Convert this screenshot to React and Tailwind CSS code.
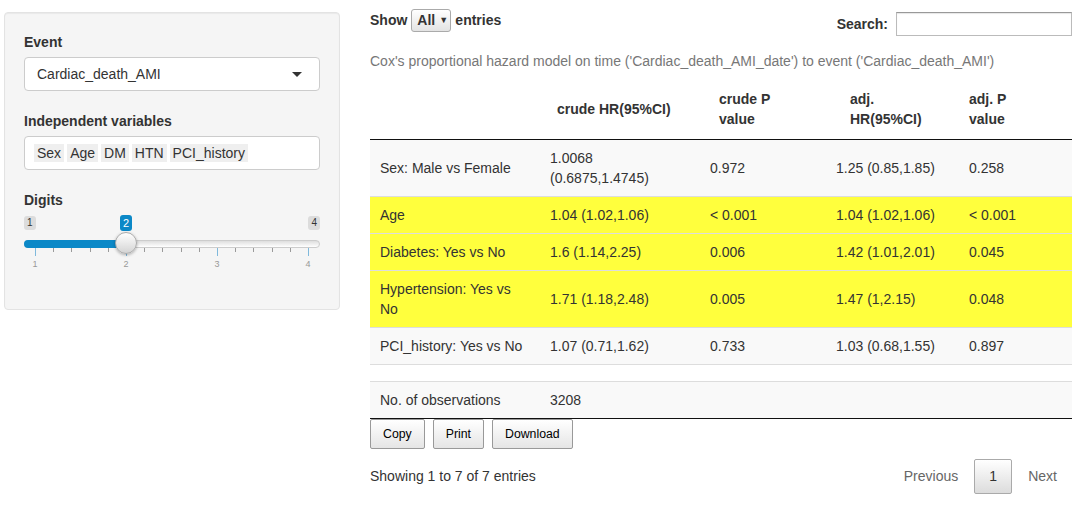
const rows = [
  { v: "Sex: Male vs Female", c: "1.0068\n(0.6875,1.4745)", p: "0.972", a: "1.25 (0.85,1.85)", ap: "0.258", bg: "bg-[#f9f9f9]" },
  { v: "Age", c: "1.04 (1.02,1.06)", p: "< 0.001", a: "1.04 (1.02,1.06)", ap: "< 0.001", bg: "bg-[#ffff3d]" },
  { v: "Diabetes: Yes vs No", c: "1.6 (1.14,2.25)", p: "0.006", a: "1.42 (1.01,2.01)", ap: "0.045", bg: "bg-[#ffff3d]" },
  { v: "Hypertension: Yes vs\nNo", c: "1.71 (1.18,2.48)", p: "0.005", a: "1.47 (1,2.15)", ap: "0.048", bg: "bg-[#ffff3d]" },
  { v: "PCI_history: Yes vs No", c: "1.07 (0.71,1.62)", p: "0.733", a: "1.03 (0.68,1.55)", ap: "0.897", bg: "bg-[#f9f9f9]" },
  { v: "", c: "", p: "", a: "", ap: "", bg: "bg-white" },
  { v: "No. of observations", c: "3208", p: "", a: "", ap: "", bg: "bg-[#f9f9f9]" },
];

const tags = ["Sex", "Age", "DM", "HTN", "PCI_history"];

// major ticks at 11, 102, 193, 284 (relative to slider box)
const majors = [11, 102, 193, 284];
const minors = [];
for (let i = 0; i < 3; i++) {
  for (let j = 1; j < 5; j++) minors.push(11 + i * 91 + j * 18.2);
}

const Slider = () => (
  <div className="relative h-[60px] mt-[5px]">
    <span className="absolute left-0 top-[1px] px-[3px] rounded-[3px] bg-[#dcdcdc] text-[10px] leading-[14px] text-[#333]">1</span>
    <span className="absolute right-0 top-[1px] px-[3px] rounded-[3px] bg-[#dcdcdc] text-[10px] leading-[14px] text-[#333]">4</span>
    <span className="absolute left-[96px] top-0 px-[3px] rounded-[3px] bg-[#0b88c7] text-[11px] leading-[16px] text-white">2</span>
    <div className="absolute left-0 right-0 top-[25px] h-[8px] rounded-full border border-[#cccccc] bg-gradient-to-b from-[#dedede] to-white" />
    <div className="absolute left-0 w-[102px] top-[25px] h-[8px] rounded-l-full bg-[#0b88c7]" />
    {majors.map((x, i) => (
      <div key={"M" + i}>
        <div className="absolute top-[33px] h-[8px] w-px bg-[#7fb9dc]" style={{ left: x }} />
        <span className="absolute top-[44px] w-[20px] -ml-[10px] text-center text-[9px] leading-[11px] text-[#999]" style={{ left: x }}>
          {i + 1}
        </span>
      </div>
    ))}
    {minors.map((x, i) => (
      <div key={"m" + i} className="absolute top-[33px] h-[4px] w-px bg-[#9a9a9a]" style={{ left: x }} />
    ))}
    <div className="absolute left-[91px] top-[17px] w-[22px] h-[22px] rounded-full border border-[#aaaaaa] bg-gradient-to-b from-white to-[#d4d4d4] shadow-[0_1px_3px_rgba(0,0,0,0.3)]" />
  </div>
);

const Sidebar = () => (
  <div className="w-[340px] pl-[4px] pt-[12px] shrink-0">
    <div className="w-[336px] h-[298px] bg-[#f5f5f5] border border-[#e3e3e3] rounded-[4px] shadow-[inset_0_1px_1px_rgba(0,0,0,0.05)] px-[19px] pt-[19px]">
      <div className="font-bold leading-[20px] mb-[5px]">Event</div>
      <div className="h-[34px] bg-white border border-[#cccccc] rounded-[4px] flex items-center justify-between pl-[12px] pr-[17px]">
        <span>Cardiac_death_AMI</span>
        <svg width="10" height="5" viewBox="0 0 10 5">
          <polygon points="0,0 10,0 5,5" fill="#333" />
        </svg>
      </div>

      <div className="font-bold leading-[20px] mt-[20px] mb-[5px]">Independent variables</div>
      <div className="h-[34px] bg-white border border-[#cccccc] rounded-[4px] flex items-center gap-[3px] pl-[9px]">
        {tags.map((t) => (
          <span key={t} className="bg-[#efefef] px-[3px] leading-[18px]">
            {t}
          </span>
        ))}
      </div>

      <div className="font-bold leading-[20px] mt-[20px]">Digits</div>
      <Slider />
    </div>
  </div>
);

const Btn = ({ children }) => (
  <div className="h-[30px] px-[12px] flex items-center border border-[#999] rounded-[2px] bg-gradient-to-b from-white to-[#e5e5e5] text-[12.3px] text-black">
    {children}
  </div>
);

const App = () => {
  return (
    <div className="flex w-[1080px] h-[521px] bg-white text-[14px] text-[#333] font-['Liberation_Sans',Arial,sans-serif] overflow-hidden">
      <Sidebar />

      <div className="ml-[30px] w-[702px]">
        <div className="h-[43px] flex justify-between items-start">
          <div className="mt-[9px] h-[23px] flex items-center font-bold">
            <span>Show</span>
            <div className="mx-[4px] w-[40px] h-[23px] border border-[#aaa] rounded-[3px] bg-gradient-to-b from-white to-[#e3e3e3] flex items-center pl-[5px] gap-[4px]">
              <span>All</span>
              <span className="text-[9px]">▼</span>
            </div>
            <span>entries</span>
          </div>
          <div className="mt-[12px] h-[24px] flex items-center font-bold">
            <span className="mr-[8px]">Search:</span>
            <div className="w-[176px] h-[24px] bg-white border border-[#bbb] border-t-[#999] shadow-[inset_0_1px_1px_rgba(0,0,0,0.1)]" />
          </div>
        </div>

        <div className="py-[8px] leading-[20px] text-[#777]">
          Cox's proportional hazard model on time ('Cardiac_death_AMI_date') to event ('Cardiac_death_AMI')
        </div>

        <table className="w-[702px] table-fixed border-collapse leading-[20px]">
          <colgroup>
            <col className="w-[170px]" />
            <col className="w-[160px]" />
            <col className="w-[126px]" />
            <col className="w-[133px]" />
            <col className="w-[113px]" />
          </colgroup>
          <thead>
            <tr className="text-left font-bold">
              <th className="py-[10px] border-b border-b-[#111]"></th>
              <th className="py-[10px] pl-[17px] border-b border-b-[#111] whitespace-nowrap">crude HR(95%CI)</th>
              <th className="py-[10px] pl-[19px] border-b border-b-[#111] whitespace-nowrap">
                crude P
                <br />
                value
              </th>
              <th className="py-[10px] pl-[24px] border-b border-b-[#111] whitespace-nowrap">
                adj.
                <br />
                HR(95%CI)
              </th>
              <th className="py-[10px] pl-[10px] border-b border-b-[#111] whitespace-nowrap">
                adj. P
                <br />
                value
              </th>
            </tr>
          </thead>
          <tbody>
            {rows.map((r, i) => {
              const last = i === rows.length - 1;
              const cell =
                "px-[10px] py-[8px] align-middle whitespace-pre-line " +
                (i > 0 ? "border-t border-t-[#ddd] " : "") +
                (last ? "border-b border-b-[#111]" : "");
              return (
                <tr key={i} className={r.bg}>
                  <td className={cell}>{r.v}</td>
                  <td className={cell}>{r.c}</td>
                  <td className={cell}>{r.p}</td>
                  <td className={cell}>{r.a}</td>
                  <td className={cell}>{r.ap}</td>
                </tr>
              );
            })}
          </tbody>
        </table>

        <div className="flex gap-[8px]">
          <Btn>Copy</Btn>
          <Btn>Print</Btn>
          <Btn>Download</Btn>
        </div>

        <div className="mt-[10px] h-[35px] flex items-center justify-between">
          <span>Showing 1 to 7 of 7 entries</span>
          <div className="flex items-center">
            <span className="pl-[14px] pr-[16px] text-[#666]">Previous</span>
            <span className="h-[35px] w-[38px] flex items-center justify-center border border-[#aaa] rounded-[2px] bg-gradient-to-b from-white to-[#dcdcdc] text-[#333]">
              1
            </span>
            <span className="pl-[16px] pr-[15px] text-[#666]">Next</span>
          </div>
        </div>
      </div>
    </div>
  );
};

export default App;
